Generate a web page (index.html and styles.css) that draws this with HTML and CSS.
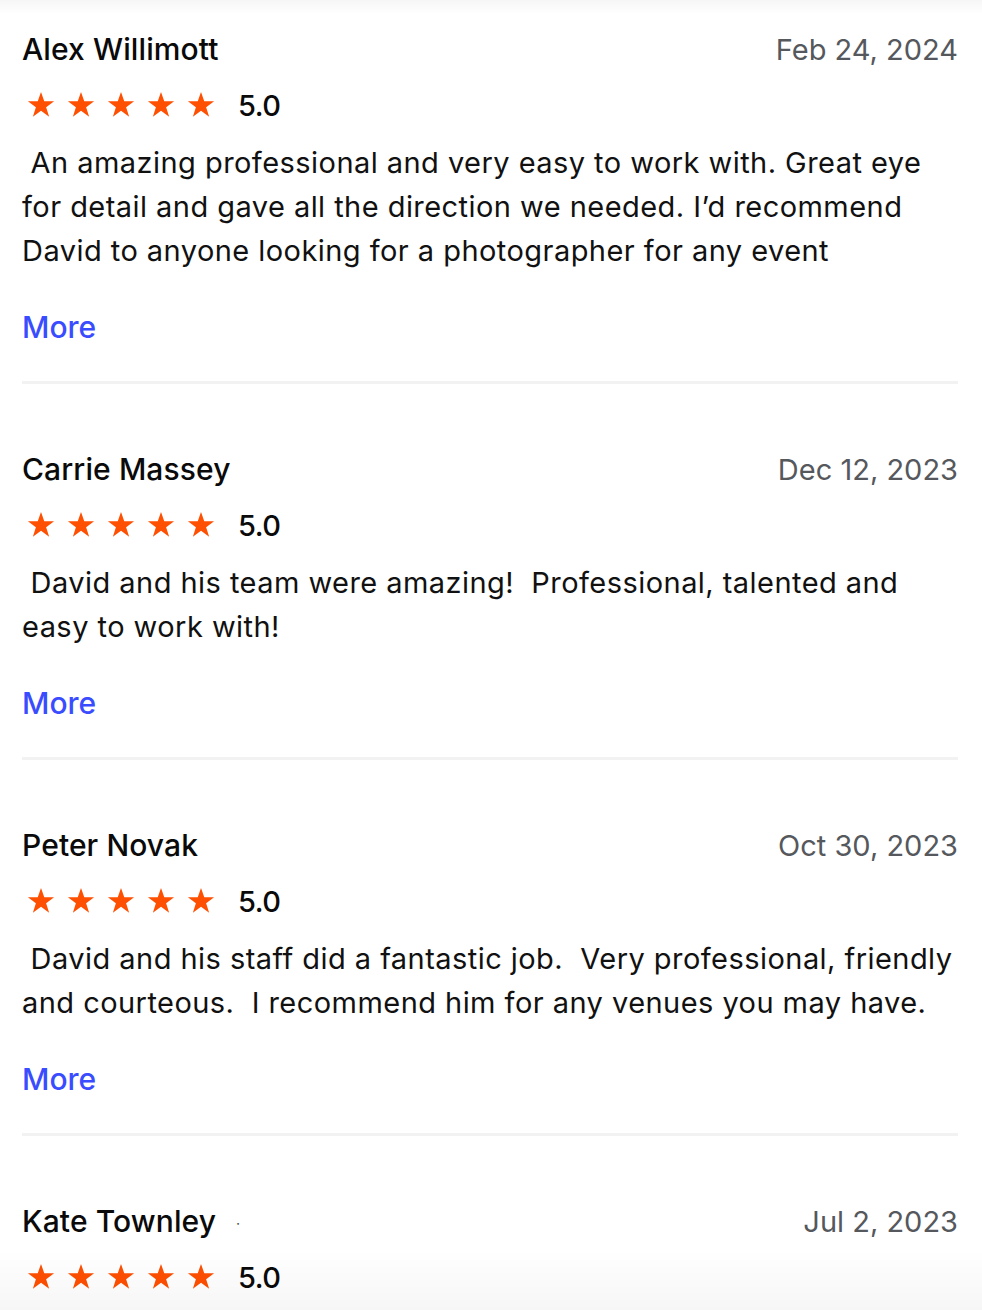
FILE: index.html
```html
<!DOCTYPE html>
<html lang="en">
<head>
<meta charset="utf-8">
<title>Reviews</title>
<link rel="stylesheet" href="styles.css">
</head>
<body>
<main class="reviews">
  <article class="review">
    <header class="review-head">
      <span class="name">Alex Willimott</span>
      <span class="date">Feb 24, 2024</span>
    </header>
    <div class="rating">
      <span class="stars">
        <svg class="star" viewBox="0 0 24 24"><polygon points="12,1.5 14.6,9 22.5,9 16.1,13.7 18.5,21.3 12,16.6 5.5,21.3 7.9,13.7 1.5,9 9.4,9"/></svg>
        <svg class="star" viewBox="0 0 24 24"><polygon points="12,1.5 14.6,9 22.5,9 16.1,13.7 18.5,21.3 12,16.6 5.5,21.3 7.9,13.7 1.5,9 9.4,9"/></svg>
        <svg class="star" viewBox="0 0 24 24"><polygon points="12,1.5 14.6,9 22.5,9 16.1,13.7 18.5,21.3 12,16.6 5.5,21.3 7.9,13.7 1.5,9 9.4,9"/></svg>
        <svg class="star" viewBox="0 0 24 24"><polygon points="12,1.5 14.6,9 22.5,9 16.1,13.7 18.5,21.3 12,16.6 5.5,21.3 7.9,13.7 1.5,9 9.4,9"/></svg>
        <svg class="star" viewBox="0 0 24 24"><polygon points="12,1.5 14.6,9 22.5,9 16.1,13.7 18.5,21.3 12,16.6 5.5,21.3 7.9,13.7 1.5,9 9.4,9"/></svg>
      </span>
      <span class="score">5.0</span>
    </div>
    <p class="text">&nbsp;An amazing professional and very easy to work with. Great eye for detail and gave all the direction we needed. I’d recommend David to anyone looking for a photographer for any event</p>
    <a class="more" href="#">More</a>
  </article>

  <article class="review">
    <header class="review-head">
      <span class="name">Carrie Massey</span>
      <span class="date">Dec 12, 2023</span>
    </header>
    <div class="rating">
      <span class="stars">
        <svg class="star" viewBox="0 0 24 24"><polygon points="12,1.5 14.6,9 22.5,9 16.1,13.7 18.5,21.3 12,16.6 5.5,21.3 7.9,13.7 1.5,9 9.4,9"/></svg>
        <svg class="star" viewBox="0 0 24 24"><polygon points="12,1.5 14.6,9 22.5,9 16.1,13.7 18.5,21.3 12,16.6 5.5,21.3 7.9,13.7 1.5,9 9.4,9"/></svg>
        <svg class="star" viewBox="0 0 24 24"><polygon points="12,1.5 14.6,9 22.5,9 16.1,13.7 18.5,21.3 12,16.6 5.5,21.3 7.9,13.7 1.5,9 9.4,9"/></svg>
        <svg class="star" viewBox="0 0 24 24"><polygon points="12,1.5 14.6,9 22.5,9 16.1,13.7 18.5,21.3 12,16.6 5.5,21.3 7.9,13.7 1.5,9 9.4,9"/></svg>
        <svg class="star" viewBox="0 0 24 24"><polygon points="12,1.5 14.6,9 22.5,9 16.1,13.7 18.5,21.3 12,16.6 5.5,21.3 7.9,13.7 1.5,9 9.4,9"/></svg>
      </span>
      <span class="score">5.0</span>
    </div>
    <p class="text">&nbsp;David and his team were amazing!&nbsp; Professional, talented and easy to work with!</p>
    <a class="more" href="#">More</a>
  </article>

  <article class="review">
    <header class="review-head">
      <span class="name">Peter Novak</span>
      <span class="date">Oct 30, 2023</span>
    </header>
    <div class="rating">
      <span class="stars">
        <svg class="star" viewBox="0 0 24 24"><polygon points="12,1.5 14.6,9 22.5,9 16.1,13.7 18.5,21.3 12,16.6 5.5,21.3 7.9,13.7 1.5,9 9.4,9"/></svg>
        <svg class="star" viewBox="0 0 24 24"><polygon points="12,1.5 14.6,9 22.5,9 16.1,13.7 18.5,21.3 12,16.6 5.5,21.3 7.9,13.7 1.5,9 9.4,9"/></svg>
        <svg class="star" viewBox="0 0 24 24"><polygon points="12,1.5 14.6,9 22.5,9 16.1,13.7 18.5,21.3 12,16.6 5.5,21.3 7.9,13.7 1.5,9 9.4,9"/></svg>
        <svg class="star" viewBox="0 0 24 24"><polygon points="12,1.5 14.6,9 22.5,9 16.1,13.7 18.5,21.3 12,16.6 5.5,21.3 7.9,13.7 1.5,9 9.4,9"/></svg>
        <svg class="star" viewBox="0 0 24 24"><polygon points="12,1.5 14.6,9 22.5,9 16.1,13.7 18.5,21.3 12,16.6 5.5,21.3 7.9,13.7 1.5,9 9.4,9"/></svg>
      </span>
      <span class="score">5.0</span>
    </div>
    <p class="text">&nbsp;David and his staff did a fantastic job.&nbsp; Very professional, friendly and courteous.&nbsp; I recommend him for any venues you may have.</p>
    <a class="more" href="#">More</a>
  </article>

  <article class="review last">
    <header class="review-head">
      <span class="name">Kate Townley <span class="dot">·</span></span>
      <span class="date">Jul 2, 2023</span>
    </header>
    <div class="rating">
      <span class="stars">
        <svg class="star" viewBox="0 0 24 24"><polygon points="12,1.5 14.6,9 22.5,9 16.1,13.7 18.5,21.3 12,16.6 5.5,21.3 7.9,13.7 1.5,9 9.4,9"/></svg>
        <svg class="star" viewBox="0 0 24 24"><polygon points="12,1.5 14.6,9 22.5,9 16.1,13.7 18.5,21.3 12,16.6 5.5,21.3 7.9,13.7 1.5,9 9.4,9"/></svg>
        <svg class="star" viewBox="0 0 24 24"><polygon points="12,1.5 14.6,9 22.5,9 16.1,13.7 18.5,21.3 12,16.6 5.5,21.3 7.9,13.7 1.5,9 9.4,9"/></svg>
        <svg class="star" viewBox="0 0 24 24"><polygon points="12,1.5 14.6,9 22.5,9 16.1,13.7 18.5,21.3 12,16.6 5.5,21.3 7.9,13.7 1.5,9 9.4,9"/></svg>
        <svg class="star" viewBox="0 0 24 24"><polygon points="12,1.5 14.6,9 22.5,9 16.1,13.7 18.5,21.3 12,16.6 5.5,21.3 7.9,13.7 1.5,9 9.4,9"/></svg>
      </span>
      <span class="score">5.0</span>
    </div>
  </article>
</main>
</body>
</html>
```

FILE: styles.css
```css
html {
  overflow: hidden;
}

body {
  margin: 0;
  background: #ffffff;
  font-family: Inter, "Liberation Sans", Arial, sans-serif;
  color: #111111;
}

body::before {
  content: "";
  position: fixed;
  left: 0;
  right: 0;
  top: 0;
  height: 14px;
  background: linear-gradient(to bottom, rgba(0, 0, 0, 0.035), rgba(0, 0, 0, 0));
  pointer-events: none;
}

body::after {
  content: "";
  position: fixed;
  left: 0;
  right: 0;
  bottom: 0;
  height: 60px;
  background: linear-gradient(to bottom, rgba(0, 0, 0, 0), rgba(0, 0, 0, 0.035));
  pointer-events: none;
}

.reviews {
  padding: 29px 24px 0 22px;
}

.review {
  display: flex;
  flex-direction: column;
  padding-bottom: 34px;
  border-bottom: 3px solid #f2f2f2;
  margin-bottom: 65px;
}

.review.last {
  border-bottom: none;
  padding-bottom: 0;
  margin-bottom: 0;
}

.review-head {
  display: flex;
  justify-content: space-between;
  align-items: center;
  height: 40px;
}

.name {
  font-size: 30px;
  font-weight: 500;
  color: #0a0a0a;
  letter-spacing: 0.1px;
}

.dot {
  font-size: 12px;
  color: #444;
  vertical-align: middle;
  margin-left: 12px;
}

.date {
  font-size: 29px;
  color: #55585c;
  letter-spacing: 0;
}

.rating {
  display: flex;
  align-items: center;
  height: 40px;
  margin-top: 16px;
}

.stars {
  display: flex;
  gap: 10px;
  margin-left: 4px;
}

.star {
  width: 30px;
  height: 30px;
  fill: #ff4f00;
}

.score {
  margin-left: 22px;
  font-size: 29px;
  font-weight: 500;
  color: #0a0a0a;
  letter-spacing: -0.5px;
}

.text {
  margin: 16px 0 0;
  font-size: 29px;
  line-height: 44px;
  color: #111111;
  letter-spacing: 0.45px;
}

.more {
  margin-top: 34px;
  height: 40px;
  line-height: 40px;
  font-size: 30px;
  font-weight: 500;
  color: #3a4cff;
  text-decoration: none;
  align-self: flex-start;
}
```
